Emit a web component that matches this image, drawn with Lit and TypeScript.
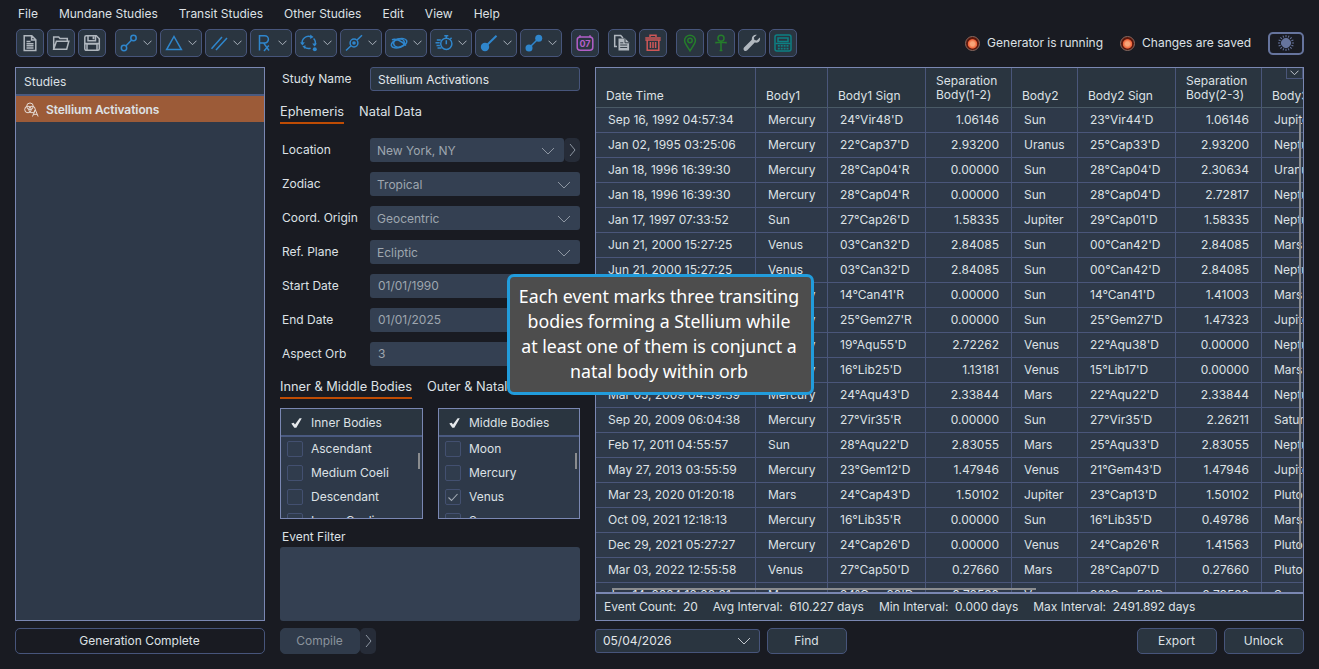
import { html, css, svg, LitElement, TemplateResult } from 'lit';
import { customElement, property } from 'lit/decorators.js';
import { classMap } from 'lit/directives/class-map.js';

const ICONS: Record<string, TemplateResult> = {
  file: svg`<path d="M3.2 1.8h7.6l4 4v10.6H3.2z M10.6 2v4h4 M5.5 7.5h4 M5.5 9.7h7 M5.5 11.8h7 M5.5 14h7" />`,
  open: svg`<path d="M1.7 15.2V3h5l1.3 1.6h7.3v2.6 M1.7 15.2L4.4 7.2h12.4l-2.1 8z" />`,
  save: svg`<path d="M1.8 3.3a1.5 1.5 0 0 1 1.5-1.5h10l3 3v10a1.5 1.5 0 0 1-1.5 1.5H3.3a1.5 1.5 0 0 1-1.5-1.5z" /><path d="M5 2v4.8h7.5V2 M4 16V9.8h10V16" /><path class="fill" d="M9.6 2.2h1.8v3H9.6z M2 8.8h14v1.8H2z" />`,
  aspect: svg`<circle cx="4" cy="14" r="2.7" /><circle cx="13.5" cy="4" r="2.7" /><path d="M5.8 12.1L11.6 6" />`,
  triangle: svg`<path d="M9 2.5L16.4 15.6H1.6z" />`,
  parallel: svg`<path d="M1.5 14.8L12 3 M6 16L17 4" />`,
  retro: svg`<path d="M4.5 16.5V1.7h5.3a3.6 3.6 0 0 1 0 7.2H4.5 M8.5 8.9L14 16.5 M13.8 11.5L9 17" />`,
  cycle: svg`<path d="M2.3 10.2a6.4 6.4 0 0 1 9-7.2 M13.6 4.6a6.4 6.4 0 0 1 1.3 6.7 M10.6 14.2a6.4 6.4 0 0 1-6.3-1.2" /><path class="fill" d="M0 8.6l4.8-.4-2.2 3.4z M12.2 9.4l4.8.2-2.6 3z M10.2 .4l3.4 2.6-3.4 2z M5.6 11.2l-.6 3.8-2.6-2.8z" /><circle class="fill" cx="14.8" cy="15.3" r="2" />`,
  transit: svg`<circle cx="9" cy="9" r="3.9" /><circle class="fill" cx="9" cy="9" r="1.8" /><path d="M1 16.5L6 11.7 M12 6L17 1.2" />`,
  orbit: svg`<ellipse cx="9" cy="9" rx="5.4" ry="4" transform="rotate(-12 9 9)" /><ellipse cx="9" cy="9.2" rx="8" ry="4.2" transform="rotate(-18 9 9)" /><path d="M2 5.8c3-2 10 1.2 14 5.7" />`,
  timer: svg`<circle cx="11.3" cy="9.8" r="5.6" /><path d="M11.3 4V1.8 M9.3 1.8h4 M11.3 6.2v4 M15.3 5l1.3-1.3 M1.8 6h4 M.5 8.7h4.2 M1.5 11.4h3.4 M2.5 14h4" />`,
  comet: svg`<circle class="fill" cx="5" cy="13" r="4.2" /><path class="thick" d="M6 12L16.5 1.8" />`,
  link: svg`<circle class="fill" cx="4" cy="14" r="3.5" /><circle class="fill" cx="13.7" cy="4.2" r="3.5" /><path d="M4 14L13.7 4.2" />`,
  calendar: svg`<rect x="1.2" y="3" width="15.6" height="13.2" rx="3" /><path d="M4 1.3v2 M14 1.3v2" /><text x="9" y="13.1" text-anchor="middle">07</text>`,
  copy: svg`<path d="M4 12.5H1.7V1.5h6L10 4" /><path d="M5.5 4.5h6.6l4 4v8H5.5z" class="fill" /><path class="cut" d="M12 4.8v4h4 M7.2 8.8h3 M7.2 11h7 M7.2 13.5h7" />`,
  trash: svg`<path d="M6 3V1.3h6V3 M1.3 4h15.4 M1.3 6h15.4 M3.2 6v10.2h11.6V6 M6.4 8v6 M9 8v6 M11.6 8v6" />`,
  pin: svg`<path d="M9 16.8C6.5 12.8 3.6 9.5 3.6 6.6a5.4 5.4 0 0 1 10.8 0c0 2.9-2.9 6.2-5.4 10.2z" /><circle cx="9" cy="6.5" r="2.2" />`,
  ankh: svg`<circle cx="9" cy="4.3" r="3" /><path d="M9 7.5v9.4 M3.8 8.6h10.4 M7.6 16.6h2.8 M4 7.8v1.6 M14 7.8v1.6" />`,
  wrench: svg`<path class="fill" d="M16.8 3.5l-3 3-2.4-.5-.5-2.4 3-2.8C11 .2 8.5 2.2 8.8 5.7L1 13.6c-1.6 2 1 4.5 3 3l7.7-8c3.6.8 6.3-2 5.1-5.1z" />`,
  calc: svg`<rect x="1" y="1" width="16" height="16" rx="2" /><path d="M4 4h10v3.4H4z M1.5 9.5h15" /><path class="dots" d="M3.8 11.8h10.8 M3.8 14.6h10.8" />`,
};

const MENU = ['File', 'Mundane Studies', 'Transit Studies', 'Other Studies', 'Edit', 'View', 'Help'];

type Tool = { icon: string; color?: string; menu?: boolean };

const TOOLS: Tool[][] = [
  [{ icon: 'file' }, { icon: 'open' }, { icon: 'save' }],
  ['aspect', 'triangle', 'parallel', 'retro', 'cycle', 'transit', 'orbit', 'timer', 'comet', 'link']
    .map((icon) => ({ icon, color: 'blue', menu: true })),
  [{ icon: 'calendar', color: 'violet' }],
  [{ icon: 'copy' }, { icon: 'trash', color: 'red' }],
  [{ icon: 'pin', color: 'green' }, { icon: 'ankh', color: 'green' }, { icon: 'wrench' }, { icon: 'calc', color: 'teal' }],
];

const FIELDS = [
  { label: 'Location', value: 'New York, NY', select: true, more: true },
  { label: 'Zodiac', value: 'Tropical', select: true },
  { label: 'Coord. Origin', value: 'Geocentric', select: true },
  { label: 'Ref. Plane', value: 'Ecliptic', select: true },
  { label: 'Start Date', value: '01/01/1990' },
  { label: 'End Date', value: '01/01/2025' },
  { label: 'Aspect Orb', value: '3' },
];

const COLUMNS = ['Date Time', 'Body1', 'Body1 Sign', 'Separation Body(1-2)', 'Body2', 'Body2 Sign', 'Separation Body(2-3)', 'Body3'];

const ROWS = [
  ['Sep 16, 1992 04:57:34', 'Mercury', "24°Vir48'D", '1.06146', 'Sun', "23°Vir44'D", '1.06146', 'Jupiter'],
  ['Jan 02, 1995 03:25:06', 'Mercury', "22°Cap37'D", '2.93200', 'Uranus', "25°Cap33'D", '2.93200', 'Neptune'],
  ['Jan 18, 1996 16:39:30', 'Mercury', "28°Cap04'R", '0.00000', 'Sun', "28°Cap04'D", '2.30634', 'Uranus'],
  ['Jan 18, 1996 16:39:30', 'Mercury', "28°Cap04'R", '0.00000', 'Sun', "28°Cap04'D", '2.72817', 'Neptune'],
  ['Jan 17, 1997 07:33:52', 'Sun', "27°Cap26'D", '1.58335', 'Jupiter', "29°Cap01'D", '1.58335', 'Neptune'],
  ['Jun 21, 2000 15:27:25', 'Venus', "03°Can32'D", '2.84085', 'Sun', "00°Can42'D", '2.84085', 'Mars'],
  ['Jun 21, 2000 15:27:25', 'Venus', "03°Can32'D", '2.84085', 'Sun', "00°Can42'D", '2.84085', 'Neptune'],
  ['Jul 06, 2000 11:20:10', 'Mercury', "14°Can41'R", '0.00000', 'Sun', "14°Can41'D", '1.41003', 'Mars'],
  ['Jun 17, 2001 02:14:41', 'Mercury', "25°Gem27'R", '0.00000', 'Sun', "25°Gem27'D", '1.47323', 'Jupiter'],
  ['Feb 08, 2005 18:05:22', 'Mercury', "19°Aqu55'D", '2.72262', 'Venus', "22°Aqu38'D", '0.00000', 'Neptune'],
  ['Sep 12, 2008 09:48:03', 'Mercury', "16°Lib25'D", '1.13181', 'Venus', "15°Lib17'D", '0.00000', 'Mars'],
  ['Mar 05, 2009 04:39:39', 'Mercury', "24°Aqu43'D", '2.33844', 'Mars', "22°Aqu22'D", '2.33844', 'Neptune'],
  ['Sep 20, 2009 06:04:38', 'Mercury', "27°Vir35'R", '0.00000', 'Sun', "27°Vir35'D", '2.26211', 'Saturn'],
  ['Feb 17, 2011 04:55:57', 'Sun', "28°Aqu22'D", '2.83055', 'Mars', "25°Aqu33'D", '2.83055', 'Neptune'],
  ['May 27, 2013 03:55:59', 'Mercury', "23°Gem12'D", '1.47946', 'Venus', "21°Gem43'D", '1.47946', 'Jupiter'],
  ['Mar 23, 2020 01:20:18', 'Mars', "24°Cap43'D", '1.50102', 'Jupiter', "23°Cap13'D", '1.50102', 'Pluto'],
  ['Oct 09, 2021 12:18:13', 'Mercury', "16°Lib35'R", '0.00000', 'Sun', "16°Lib35'D", '0.49786', 'Mars'],
  ['Dec 29, 2021 05:27:27', 'Mercury', "24°Cap26'D", '0.00000', 'Venus', "24°Cap26'R", '1.41563', 'Pluto'],
  ['Mar 03, 2022 12:55:58', 'Venus', "27°Cap50'D", '0.27660', 'Mars', "28°Cap07'D", '0.27660', 'Pluto'],
  ['Jun 14, 2024 12:38:31', 'Mercury', "24°Gem28'D", '0.78528', 'Venus', "26°Gem52'D", '0.78528', 'Sun'],
];

const chevron = html`<svg class="chevron" width="14" height="8" viewBox="0 0 14 8"><path d="M1 1l6 6 6-6" /></svg>`;
const arrow = html`<svg class="chevron" width="7" height="14" viewBox="0 0 7 14"><path d="M1 1l5 6-5 6" /></svg>`;

@customElement('tool-button')
export class ToolButton extends LitElement {
  static styles = css`
    :host {
      display: block;
    }
    .button {
      box-sizing: border-box;
      height: 28px;
      width: 28px;
      border: 1px solid #47557b;
      border-radius: 5px;
      background: #2a3540;
      display: flex;
      align-items: center;
      justify-content: center;
      padding: 0;
      color: #b0b7be;
    }
    .menu {
      width: 42px;
      gap: 5px;
    }
    .blue { color: #2f86cc; }
    .violet { color: #b35fc8; }
    .red { color: #cf5757; }
    .green { color: #257d2b; }
    .teal { color: #0d8083; }
    svg {
      display: block;
      fill: none;
      stroke: currentColor;
      stroke-width: 1.5;
      flex: none;
    }
    .fill { fill: currentColor; stroke: none; }
    .thick { stroke-width: 2; }
    .cut { stroke: #2a3540; stroke-width: 0.9; }
    .dots { stroke-width: 1.8; stroke-dasharray: 2 0.9; }
    .caret { stroke: #a9b1ba; stroke-width: 1; }
    text {
      font: bold 9px Inter, sans-serif;
      fill: currentColor;
      stroke: none;
    }
  `;

  @property({ type: String }) icon = 'file';
  @property({ type: String }) color = '';
  @property({ type: Boolean }) menu = false;

  render() {
    const classes: Record<string, boolean> = { button: true, menu: this.menu };
    if (this.color) classes[this.color] = true;
    return html`
      <button class=${classMap(classes)}>
        <svg width="18" height="18" viewBox="0 0 18 18">${ICONS[this.icon]}</svg>
        ${this.menu ? html`<svg class="caret" width="9" height="6" viewBox="0 0 9 6"><path d="M.5 .7l4 4 4-4" /></svg>` : ''}
      </button>
    `;
  }
}

@customElement('body-list')
export class BodyList extends LitElement {
  static styles = css`
    :host {
      display: block;
      box-sizing: border-box;
      position: relative;
      height: 111px;
      border: 1px solid #7a87b2;
      background: #2e3949;
      overflow: hidden;
    }
    .head {
      height: 24px;
      display: flex;
      align-items: center;
      gap: 9px;
      padding: 2px 0 0 10px;
      background: #2a3540;
      border-bottom: 2px solid #4a5a80;
      box-sizing: content-box;
    }
    .head svg { fill: #e6e9ec; }
    .item {
      display: flex;
      align-items: center;
      height: 24px;
      gap: 8px;
      padding-left: 6px;
    }
    .box {
      box-sizing: border-box;
      width: 16px;
      height: 16px;
      border: 1px solid #435070;
      border-radius: 2px;
      background: #303c4d;
    }
    .box svg {
      display: block;
      margin: 2px 1px;
      fill: none;
      stroke: #a4acb5;
      stroke-width: 1.1;
    }
    .thumb {
      position: absolute;
      right: 2px;
      top: 44px;
      width: 2px;
      height: 16px;
      background: #8a8c8f;
    }
  `;

  @property({ type: String }) heading = '';
  @property({ type: Array }) items: { name: string; on?: boolean }[] = [];

  render() {
    return html`
      <div class="head">
        <svg width="11" height="10" viewBox="0 0 11 10"><path d="M.3 5.5l2.4-.8L4 6.4 8.6 .2h2.2L5.3 9.8H3.3z" /></svg>
        <span>${this.heading}</span>
      </div>
      ${this.items.map((item) => html`
        <div class="item">
          <span class="box">${item.on ? html`<svg width="12" height="10" viewBox="0 0 12 10"><path d="M1.5 5.5l3 3L10.5 2" /></svg>` : ''}</span>
          <span>${item.name}</span>
        </div>
      `)}
      <div class="thumb"></div>
    `;
  }
}

@customElement('app-root')
export class AppRoot extends LitElement {
  static styles = css`
    :host {
      display: flex;
      flex-direction: column;
      position: relative;
      box-sizing: border-box;
      width: 1319px;
      height: 669px;
      overflow: hidden;
      background: #191b22;
      color: #dde1e5;
      font: 12px/16px Inter, sans-serif;
    }
    * { box-sizing: border-box; }
    button, input { font: inherit; color: inherit; }

    .menubar {
      display: flex;
      gap: 21px;
      height: 29px;
      padding: 6px 18px 0;
    }

    .toolbar {
      display: flex;
      height: 28px;
      padding: 0 15px 0 16px;
      gap: 9px;
    }
    .group { display: flex; gap: 3px; }
    .status {
      display: flex;
      align-items: center;
      margin-left: auto;
    }
    .lamp {
      width: 15px;
      height: 15px;
      border-radius: 50%;
      border: 1px solid #8a6a60;
      background: radial-gradient(circle at 50% 53%, #f9a478 0 2px, #ef6238 4.3px, #5a170c 5.1px);
      margin-right: 7px;
    }
    .status span { margin-right: 17px; }
    .theme {
      width: 36px;
      height: 23px;
      padding: 0;
      border: 2px solid #66749d;
      border-radius: 5px;
      background: #191b22;
      display: flex;
      align-items: center;
      justify-content: center;
    }

    .main {
      display: grid;
      grid-template-columns: 250px 300px 709px;
      column-gap: 15px;
      padding: 10px 15px 0;
      height: 564px;
    }
    .panel {
      border: 1px solid #7a87b2;
      background: #2e3949;
      height: 554px;
      overflow: hidden;
    }
    .studies h2 {
      margin: 0;
      font: inherit;
      height: 28px;
      padding: 6px 8px;
      background: #2a3540;
      border-bottom: 2px solid #4a5a80;
    }
    .selected {
      display: flex;
      align-items: center;
      gap: 7px;
      height: 26px;
      padding: 1px 0 0 8px;
      background: #9c5b38;
      font-weight: 600;
      letter-spacing: -0.08px;
    }
    .selected svg { fill: none; stroke: #e6dcd6; }

    .form { display: flex; flex-direction: column; }
    .row {
      display: grid;
      grid-template-columns: 90px 1fr;
      height: 24px;
    }
    .row label { padding: 4px 2px; }
    .field {
      display: flex;
      align-items: center;
      justify-content: space-between;
      padding: 1px 9px 0 7px;
      border-radius: 3px;
      background: #344052;
      color: #9ea6af;
      flex: 1;
    }
    .plain { padding: 0 8px; }
    .name {
      border: 1px solid #47557b;
      background: #2a3540;
      color: #e2e6ea;
    }
    .chevron {
      fill: none;
      stroke: #8d96a2;
      stroke-width: 1;
      flex: none;
    }
    .pair { display: flex; }
    .more {
      width: 16px;
      background: #262c38;
      border-radius: 5px;
      display: flex;
      align-items: center;
      justify-content: center;
    }
    .tabs { display: flex; gap: 15px; }
    .tab {
      height: 20px;
      font-size: 12.8px;
      border-bottom: 2px solid transparent;
      white-space: nowrap;
    }
    .tab.active { border-color: #bf4c04; }
    .study-tabs { margin-top: 13px; }
    .fields {
      display: flex;
      flex-direction: column;
      gap: 10px;
      margin-top: 14px;
    }
    .body-tabs { margin-top: 13px; }
    .lists {
      display: grid;
      grid-template-columns: 143px 142px;
      gap: 15px;
      margin-top: 9px;
    }
    .filter-label { padding: 10px 2px 2px; }
    .filter {
      flex: 1;
      background: #344052;
      border-radius: 3px;
    }

    .results {
      position: relative;
      display: flex;
      flex-direction: column;
    }
    .scroll {
      height: 524px;
      overflow: hidden;
    }
    table {
      table-layout: fixed;
      border-collapse: separate;
      border-spacing: 0;
      width: 752px;
    }
    th {
      height: 40px;
      padding: 0 10px 4px;
      font-weight: normal;
      line-height: 14px;
      text-align: left;
      vertical-align: bottom;
      background: #2a3540;
      border-right: 1px solid #4a567a;
      border-bottom: 1px solid #4a5a66;
    }
    th.num { padding-bottom: 5px; }
    td {
      height: 25px;
      padding: 0 12px;
      border-right: 1px solid #4a567a;
      border-bottom: 1px solid #4a567a;
      white-space: nowrap;
    }
    td.num { text-align: right; }
    .summary {
      display: flex;
      gap: 15px;
      height: 28px;
      padding: 5px 8px;
      white-space: pre;
      letter-spacing: -0.03px;
      background: #2a3540;
      border-top: 2px solid #7a87b2;
    }
    .vthumb, .hthumb {
      position: absolute;
      background: #8a8c8f;
    }
    .vthumb { right: 2px; top: 50px; width: 2px; height: 430px; }
    .hthumb { left: 16px; top: 520px; width: 424px; height: 2px; }
    .columns {
      position: absolute;
      right: 0;
      top: 0;
      width: 17px;
      height: 11px;
      padding: 0;
      border: 1px solid #4a567a;
      border-top: none;
      background: #2a3540;
      display: flex;
      align-items: center;
      justify-content: center;
    }
    .columns .chevron { stroke: #c3c8ce; }

    .footer {
      display: grid;
      grid-template-columns: 250px 300px 709px;
      column-gap: 15px;
      padding: 7px 15px 0;
    }
    .button {
      width: 80px;
      height: 26px;
      padding: 0 1px 0 0;
      border: 1px solid #47557b;
      border-radius: 5px;
      background: #2a3540;
    }
    .progress { width: 250px; background: #191b22; }
    .disabled { background: #303b4b; border-color: #303b4b; color: #8b939d; }
    .find {
      display: flex;
      align-items: center;
      gap: 7px;
    }
    .date {
      width: 165px;
      height: 24px;
      flex: none;
      border: 1px solid #47557b;
      background: #2a3540;
      color: #e2e6ea;
      padding: 0 8px 0 7px;
    }
    .date .chevron { stroke: #c3c8ce; }
    .gap { flex: 1; }

    .tooltip {
      position: absolute;
      left: 507px;
      top: 274px;
      width: 307px;
      height: 121px;
      padding: 7px 3px 0 0;
      border: 3px solid #219cdc;
      border-radius: 7px;
      background: #4d4d4d;
      color: #fff;
      font: 17.75px/25px "Noto Sans", sans-serif;
      text-align: center;
      white-space: pre-line;
    }
  `;

  _field(f: (typeof FIELDS)[number]) {
    return html`
      <div class="row">
        <label>${f.label}</label>
        <div class="pair">
          <div class=${classMap({ field: true, plain: !f.select })}><span>${f.value}</span>${f.select ? chevron : ''}</div>
          ${f.more ? html`<div class="more">${arrow}</div>` : ''}
        </div>
      </div>
    `;
  }

  render() {
    const rays = Array.from({ length: 16 }, (_, i) => i * 22.5);
    return html`
      <nav class="menubar">${MENU.map((m) => html`<span>${m}</span>`)}</nav>

      <div class="toolbar">
        ${TOOLS.map((group) => html`
          <div class="group">
            ${group.map((t) => html`<tool-button .icon=${t.icon} .color=${t.color ?? ''} .menu=${!!t.menu}></tool-button>`)}
          </div>
        `)}
        <div class="status">
          <i class="lamp"></i><span>Generator is running</span>
          <i class="lamp"></i><span>Changes are saved</span>
          <button class="theme">
            <svg width="18" height="18" viewBox="0 0 18 18" fill="#66749d" stroke="#66749d">
              <circle cx="9" cy="9" r="4.6" />
              ${rays.map((a) => svg`<path d="M9 3.2V1" transform="rotate(${a} 9 9)" />`)}
            </svg>
          </button>
        </div>
      </div>

      <div class="main">
        <div class="panel studies">
          <h2>Studies</h2>
          <div class="selected">
            <svg width="15" height="16" viewBox="0 0 15 16">
              <circle cx="6" cy="4.3" r="3.3" /><circle cx="4" cy="7.5" r="3.3" /><circle cx="8" cy="7.5" r="3.3" />
              <path d="M8.5 14.5l2.8-6.8 2.8 6.8 M9.5 12.3h3.6" />
            </svg>
            <span>Stellium Activations</span>
          </div>
        </div>

        <div class="form">
          <div class="row">
            <label>Study Name</label>
            <div class="field name">Stellium Activations</div>
          </div>
          <div class="tabs study-tabs">
            <span class="tab active">Ephemeris</span><span class="tab">Natal Data</span>
          </div>
          <div class="fields">${FIELDS.map((f) => this._field(f))}</div>
          <div class="tabs body-tabs">
            <span class="tab active">Inner &amp; Middle Bodies</span><span class="tab">Outer &amp; Natal</span>
          </div>
          <div class="lists">
            <body-list heading="Inner Bodies" .items=${[{ name: 'Ascendant' }, { name: 'Medium Coeli' }, { name: 'Descendant' }, { name: 'Imum Coeli' }]}></body-list>
            <body-list heading="Middle Bodies" .items=${[{ name: 'Moon' }, { name: 'Mercury' }, { name: 'Venus', on: true }, { name: 'Sun', on: true }]}></body-list>
          </div>
          <div class="filter-label">Event Filter</div>
          <div class="filter"></div>
        </div>

        <div class="panel results">
          <div class="scroll">
            <table>
              <colgroup>
                <col style="width:160px" /><col style="width:72px" /><col style="width:98px" /><col style="width:86px" />
                <col style="width:66px" /><col style="width:98px" /><col style="width:86px" /><col style="width:86px" />
              </colgroup>
              <tr>${COLUMNS.map((c, i) => html`<th class=${classMap({ num: i === 3 || i === 6 })}>${c}</th>`)}</tr>
              ${ROWS.map((r) => html`
                <tr>${r.map((v, i) => html`<td class=${classMap({ num: i === 3 || i === 6 })}>${v}</td>`)}</tr>
              `)}
            </table>
          </div>
          <div class="summary"><span>Event Count:  20</span><span>Avg Interval:  610.227 days</span><span>Min Interval:  0.000 days</span><span>Max Interval:  2491.892 days</span></div>
          <div class="vthumb"></div>
          <div class="hthumb"></div>
          <button class="columns"><svg class="chevron" width="9" height="6" viewBox="0 0 9 6"><path d="M.5 .7l4 4 4-4" /></svg></button>
        </div>
      </div>

      <div class="footer">
        <button class="button progress">Generation Complete</button>
        <div class="pair">
          <button class="button disabled">Compile</button>
          <div class="more">${arrow}</div>
        </div>
        <div class="find">
          <div class="field date"><span>05/04/2026</span>${chevron}</div>
          <button class="button">Find</button>
          <span class="gap"></span>
          <button class="button">Export</button>
          <button class="button">Unlock</button>
        </div>
      </div>

      <div class="tooltip">Each event marks three transiting
        bodies forming a Stellium while
        at least one of them is conjunct a
        natal body within orb</div>
    `;
  }
}
